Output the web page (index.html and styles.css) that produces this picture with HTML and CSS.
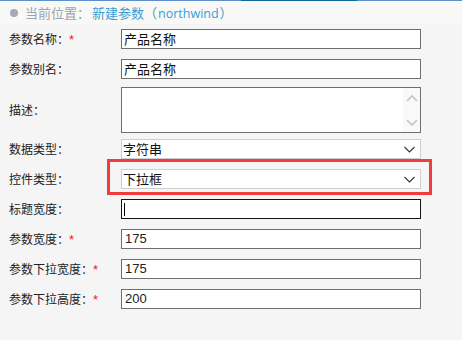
FILE: index.html
```html
<!DOCTYPE html>
<html lang="zh">
<head>
<meta charset="utf-8">
<title>新建参数</title>
<link rel="stylesheet" href="styles.css">
</head>
<body>
<div class="topline"><span class="seg"></span></div>
<div class="crumb">
  <span class="dot"></span>
  <span class="crumb-label">当前位置：</span>
  <span class="crumb-link">新建参数（<span class="latin">northwind</span>）</span>
</div>
<div class="form">
  <div class="row r1">
    <div class="label">参数名称：<span class="req">*</span></div>
    <div class="field text cjk">产品名称</div>
  </div>
  <div class="row r2">
    <div class="label">参数别名：</div>
    <div class="field text cjk">产品名称</div>
  </div>
  <div class="row r3">
    <div class="label">描述：</div>
    <div class="field area">
      <div class="scroll">
        <svg width="12" height="8" viewBox="0 0 12 8"><path d="M1 7 L6 2 L11 7" fill="none" stroke="#c4c4c4" stroke-width="1.6"/></svg>
        <svg width="12" height="8" viewBox="0 0 12 8"><path d="M1 1 L6 6 L11 1" fill="none" stroke="#c4c4c4" stroke-width="1.6"/></svg>
      </div>
    </div>
  </div>
  <div class="row r4">
    <div class="label">数据类型：</div>
    <div class="field select cjk">字符串
      <svg class="chev" width="11" height="7" viewBox="0 0 11 7"><path d="M0.5 1 L5.5 6 L10.5 1" fill="none" stroke="#333" stroke-width="1.1"/></svg>
    </div>
  </div>
  <div class="row r5">
    <div class="label">控件类型：</div>
    <div class="field select cjk">下拉框
      <svg class="chev" width="11" height="7" viewBox="0 0 11 7"><path d="M0.5 1 L5.5 6 L10.5 1" fill="none" stroke="#333" stroke-width="1.1"/></svg>
    </div>
    <div class="highlight"></div>
  </div>
  <div class="row r6">
    <div class="label">标题宽度：</div>
    <div class="field text focus"><span class="caret"></span></div>
  </div>
  <div class="row r7">
    <div class="label">参数宽度：<span class="req">*</span></div>
    <div class="field text num">175</div>
  </div>
  <div class="row r8">
    <div class="label">参数下拉宽度：<span class="req">*</span></div>
    <div class="field text num">175</div>
  </div>
  <div class="row r9">
    <div class="label">参数下拉高度：<span class="req">*</span></div>
    <div class="field text num">200</div>
  </div>
</div>
</body>
</html>
```
FILE: styles.css
```css
html, body {
  margin: 0;
  padding: 0;
  background: #f5f5f5;
  font-family: "Noto Sans CJK SC", "Noto Sans", sans-serif;
  color: #222;
}
.topline {
  height: 1px;
  background: #5d8fca;
  position: relative;
}
.topline .seg {
  position: absolute;
  left: 241px;
  width: 116px;
  top: 0;
  height: 1px;
  background: #10689a;
}
.crumb {
  height: 23px;
  background: #f8f8f7;
  display: flex;
  align-items: center;
  padding-left: 10px;
  font-size: 13px;
  line-height: 23px;
}
.dot {
  width: 8px;
  height: 8px;
  border-radius: 50%;
  background: #a3abb6;
  margin-right: 7px;
}
.crumb-label {
  color: #9ba4ad;
  margin-right: 2px;
}
.crumb-link {
  color: #3a9dd5;
}
.latin {
  font-family: "Open Sans", "Noto Sans", sans-serif;
  font-size: 12.5px;
  padding: 0 1px;
}
.form {
  display: flex;
  flex-direction: column;
  padding-top: 5px;
}
.row {
  display: flex;
  align-items: center;
  position: relative;
}
.r2, .r6, .r7, .r8, .r9 { margin-top: 10px; }
.r3 { margin-top: 8px; }
.r4 { margin-top: 6px; }
.r5 { margin-top: 10px; }
.label {
  width: 121px;
  padding-left: 9px;
  box-sizing: border-box;
  font-size: 12px;
  color: #222;
  line-height: 16px;
}
.req {
  color: #ee1c1c;
  font-family: "Liberation Sans", sans-serif;
  font-size: 13px;
}
.field {
  width: 300px;
  box-sizing: border-box;
  background: #fff;
  position: relative;
}
.text {
  height: 20px;
  border: 1px solid #6e6e6e;
  padding-left: 2px;
  font-size: 13px;
  line-height: 18px;
  color: #111;
}
.num {
  font-family: "Liberation Sans", sans-serif;
  padding-left: 3px;
  color: #222;
}
.focus {
  border-color: #161616;
}
.caret {
  position: absolute;
  left: 2px;
  top: 3px;
  width: 1px;
  height: 13px;
  background: #000;
}
.area {
  height: 46px;
  border: 1px solid #6e6e6e;
}
.scroll {
  position: absolute;
  right: 0;
  top: 0;
  bottom: 0;
  width: 17px;
  background: #f9f9f9;
  display: flex;
  flex-direction: column;
  justify-content: space-between;
  align-items: center;
  padding: 6px 0 5px;
  box-sizing: border-box;
}
.select {
  height: 20px;
  border: 1px solid #cfcfcf;
  padding-left: 1px;
  font-size: 13px;
  line-height: 18px;
  color: #111;
}
.chev {
  position: absolute;
  right: 5px;
  top: 6px;
}
.highlight {
  position: absolute;
  left: 107px;
  top: -10px;
  width: 325px;
  height: 36px;
  border: 3px solid #f03c3c;
  box-sizing: border-box;
}
```
